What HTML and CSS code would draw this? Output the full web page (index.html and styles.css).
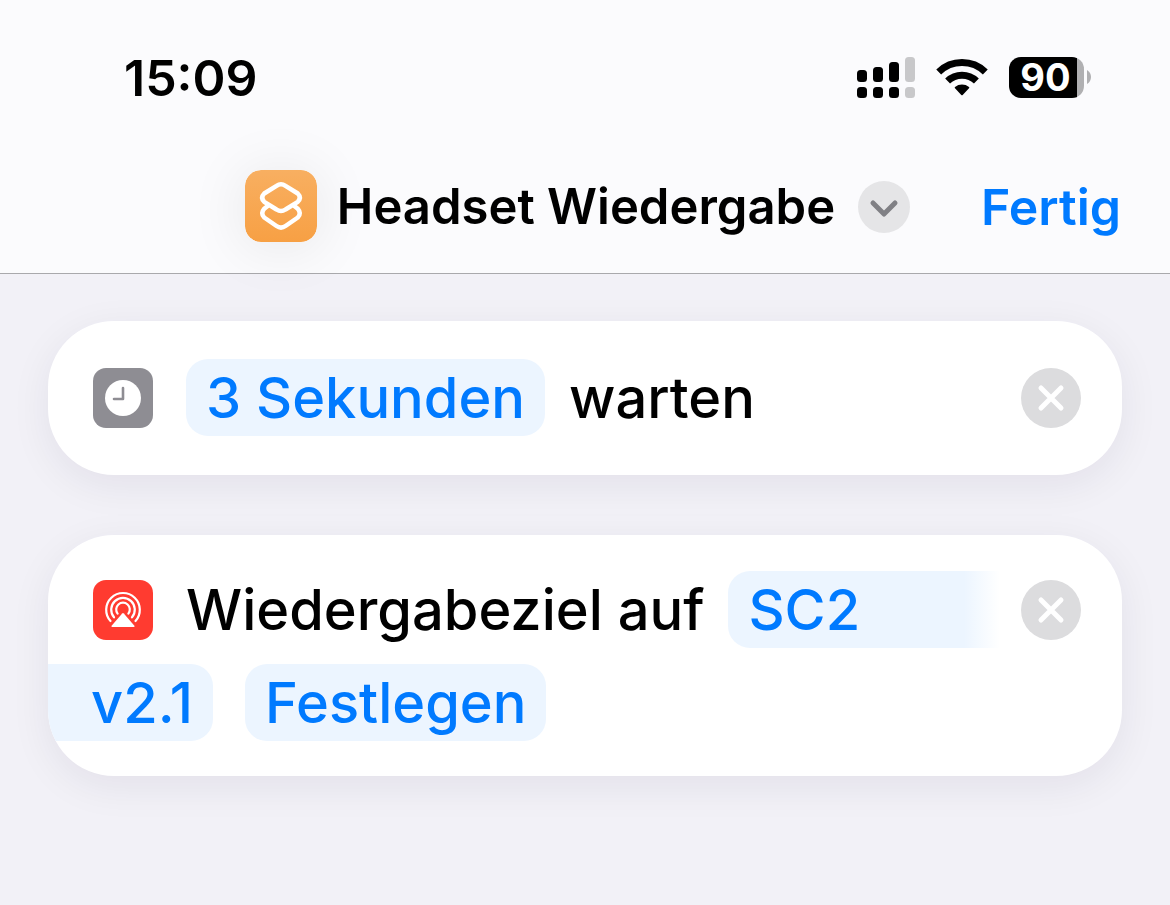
FILE: index.html
```
<!DOCTYPE html>
<html lang="de">
<head>
  <meta charset="UTF-8" />
  <meta name="viewport" content="width=device-width, initial-scale=1.0"/>
  <title>Headset Wiedergabe</title>
  <link rel="stylesheet" href="styles.css">
</head>
<body>

  <header class="header">
    <div class="status-bar">
      <time class="clock">15:09</time>
      <div class="status-icons">
        <!-- Dual SIM signal -->
        <svg class="signal" viewBox="0 0 58 41" aria-hidden="true">
          <rect x="0" y="13" width="10" height="12" rx="3.5"/>
          <rect x="16" y="10" width="10" height="15" rx="3.5"/>
          <rect x="32" y="5" width="10" height="20" rx="3.5"/>
          <rect class="off" x="48" y="0" width="10" height="25" rx="3.5"/>
          <rect x="0" y="30" width="10" height="11" rx="3.5"/>
          <rect x="16" y="30" width="10" height="11" rx="3.5"/>
          <rect x="32" y="30" width="10" height="11" rx="3.5"/>
          <rect class="off" x="48" y="30" width="10" height="11" rx="3.5"/>
        </svg>
        <!-- WiFi -->
        <svg class="wifi" viewBox="0 0 52 38" aria-hidden="true">
          <g fill="none" stroke="#000" stroke-width="7">
            <path d="M2.700 13.900A33.500 33.500 0 0 1 49.300 13.900"/>
            <path d="M11.600 23.100A20.700 20.700 0 0 1 40.400 23.100"/>
          </g>
          <path d="M19 28.900A11.300 11.300 0 0 1 33 28.900Q33.700 29.600 33 30.300L26.700 36.900Q26 37.600 25.300 36.900L19 30.300Q18.300 29.600 19 28.900Z"/>
        </svg>
        <div class="battery">
          <span class="battery-level">90</span>
          <svg class="battery-cap" viewBox="0 0 4 14" aria-hidden="true">
            <path d="M0 0Q4 2.500 4 7T0 14Z"/>
          </svg>
        </div>
      </div>
    </div>

    <div class="nav-bar">
      <div class="nav-title">
        <svg class="app-icon" viewBox="0 0 72 72" aria-hidden="true">
          <defs>
            <linearGradient id="orange" x1="0" y1="0" x2="0" y2="1">
              <stop offset="0" stop-color="#f8af61"/>
              <stop offset="1" stop-color="#f7a044"/>
            </linearGradient>
          </defs>
          <rect width="72" height="72" rx="16" fill="url(#orange)"/>
          <g fill="none" stroke="#fff" stroke-width="4.500" stroke-linejoin="round">
            <path d="M23 35.800L19.200 38.800Q15.200 43.500 19.200 47.500L31.500 56Q36 59.200 40.500 56L52.800 47.500Q56.800 43.500 52.800 38.800L49 35.800"/>
            <path d="M31.500 15.800Q36 12.700 40.500 15.800L52.800 23.500Q56.800 27.500 52.800 31.800L40.500 39.500Q36 42.500 31.500 39.500L19.200 31.800Q15.200 27.500 19.200 23.500Z"/>
          </g>
        </svg>
        <h1>Headset Wiedergabe</h1>
        <button class="chevron" type="button" aria-label="Menü">
          <svg viewBox="0 0 52 52" aria-hidden="true">
            <path d="M15 22L26 33L37 22"/>
          </svg>
        </button>
      </div>
      <button class="done" type="button">Fertig</button>
    </div>
  </header>

  <main class="actions">
    <section class="card card-wait">
      <div class="row">
        <svg class="icon" viewBox="0 0 60 60" aria-hidden="true">
          <rect width="60" height="60" rx="13" fill="#8e8d93"/>
          <circle cx="30" cy="30" r="18" fill="#fff"/>
          <path d="M30 20V31H21" fill="none" stroke="#8e8d93" stroke-width="2.600" stroke-linecap="round" stroke-linejoin="round"/>
        </svg>
        <button class="pill" type="button">3 Sekunden</button>
        <span class="text">warten</span>
        <button class="remove" type="button" aria-label="Entfernen">
          <svg viewBox="0 0 60 60" aria-hidden="true">
            <path d="M20 20L40 40M40 20L20 40"/>
          </svg>
        </button>
      </div>
    </section>

    <section class="card card-output">
      <div class="row">
        <svg class="icon" viewBox="0 0 60 60" aria-hidden="true">
          <rect width="60" height="60" rx="13" fill="#ff3b30"/>
          <g fill="none" stroke="#fff" stroke-width="2.200" stroke-linecap="round">
            <path d="M17.500 41A16.800 16.800 0 1 1 42.500 41"/>
            <path d="M21 37.300A11.800 11.800 0 1 1 39 37.300"/>
            <path d="M24.600 33.600A6.800 6.800 0 1 1 35.400 33.600"/>
          </g>
          <path d="M29.200 33.500Q30 32.700 30.800 33.500L41.400 45.700Q42 47 40.800 47H19.200Q18 47 18.600 45.700Z" fill="#fff"/>
        </svg>
        <span class="text">Wiedergabeziel auf</span>
        <button class="pill pill-start" type="button">SC2</button>
        <button class="remove" type="button" aria-label="Entfernen">
          <svg viewBox="0 0 60 60" aria-hidden="true">
            <path d="M20 20L40 40M40 20L20 40"/>
          </svg>
        </button>
      </div>
      <div class="row row-wrapped">
        <button class="pill pill-end" type="button">v2.1</button>
        <button class="pill" type="button">Festlegen</button>
      </div>
    </section>
  </main>

</body>
</html>
```
FILE: styles.css
```
* {
  margin: 0;
  padding: 0;
  box-sizing: border-box;
}

body {
  min-height: 100vh;
  font-family: "Inter", "Liberation Sans", sans-serif;
  color: #000;
  background: #f2f1f7;
}

button {
  font: inherit;
  border: none;
  background: none;
  cursor: pointer;
}

svg {
  display: block;
  flex: none;
}

/* Header */
.header {
  background: #fbfbfd;
  border-bottom: 1px solid #a9a9ac;
  padding-top: 48px;
  padding-bottom: 29px;
}

.status-bar {
  display: flex;
  justify-content: space-between;
  align-items: center;
  height: 60px;
  padding: 0 79px 0 124px;
}

.clock {
  font-size: 50px;
  font-weight: 600;
}

.status-icons {
  display: flex;
  align-items: center;
  gap: 21px;
  padding-bottom: 2px;
}

.signal {
  width: 58px;
  height: 41px;
}

.signal .off {
  fill: #c8c8ca;
}

.wifi {
  width: 52px;
  height: 38px;
}

.battery {
  display: flex;
  align-items: center;
  gap: 3px;
}

.battery-level {
  width: 75px;
  height: 41px;
  padding-right: 2px;
  border-radius: 12px;
  background: linear-gradient(to right, #000 68px, #b0b0b2 68px);
  color: #fff;
  font-size: 38px;
  font-weight: 700;
  line-height: 41px;
  text-align: center;
}

.battery-cap {
  width: 4px;
  height: 14px;
  fill: #b0b0b2;
}

.nav-bar {
  display: grid;
  grid-template-columns: 1fr auto 1fr;
  align-items: center;
  height: 74px;
  margin-top: 62px;
  padding: 0 49px 0 34px;
}

.nav-title {
  grid-column: 2;
  display: flex;
  align-items: center;
}

.app-icon {
  width: 72px;
  height: 72px;
  margin: 0 20px 2px 0;
  border-radius: 16px;
  box-shadow: 0 4px 60px rgba(0, 0, 0, 0.09);
}

h1 {
  font-size: 49px;
  font-weight: 600;
  line-height: 74px;
  white-space: nowrap;
}

.chevron {
  width: 52px;
  height: 52px;
  margin-left: 23px;
  border-radius: 50%;
  background: #e5e5e7;
}

.chevron path {
  fill: none;
  stroke: #808085;
  stroke-width: 5;
  stroke-linecap: round;
  stroke-linejoin: round;
}

.done {
  justify-self: end;
  color: #007aff;
  font-size: 50px;
  font-weight: 600;
  line-height: 74px;
}

/* Actions */
.actions {
  display: flex;
  flex-direction: column;
  gap: 60px;
  padding: 47px 48px;
}

.card {
  display: flex;
  flex-direction: column;
  gap: 16px;
  overflow: hidden;
  border-radius: 66px;
  background: #fff;
  box-shadow: 0 10px 40px rgba(30, 20, 60, 0.07);
}

.card-wait {
  padding: 38px 41px 39px 45px;
}

.card-output {
  padding: 36px 41px 35px 45px;
}

.row {
  display: flex;
  align-items: center;
  font-size: 56px;
  font-weight: 500;
  line-height: 75px;
  white-space: nowrap;
}

.icon {
  width: 60px;
  height: 60px;
  margin-right: 33px;
}

.text {
  padding-top: 2px;
}

.pill {
  height: 77px;
  padding: 2px 20px 0;
  border-radius: 22px;
  background: #ecf5ff;
  color: #007aff;
}

.pill + .text,
.text + .pill {
  margin-left: 24px;
}

/* value that runs over onto the next line */
.pill-start {
  flex: 1;
  margin-right: 21px;
  border-radius: 22px 0 0 22px;
  background: linear-gradient(to right, #ecf5ff calc(100% - 36px), #fff);
  text-align: left;
}

.pill-end {
  padding-left: 43px;
  border-radius: 0 22px 22px 0;
}

.row-wrapped {
  gap: 32px;
  margin-left: -45px;
}

.remove {
  width: 60px;
  height: 60px;
  margin-left: auto;
  border-radius: 50%;
  background: #dcdcde;
}

.remove path {
  fill: none;
  stroke: #fff;
  stroke-width: 5;
  stroke-linecap: round;
}
```
